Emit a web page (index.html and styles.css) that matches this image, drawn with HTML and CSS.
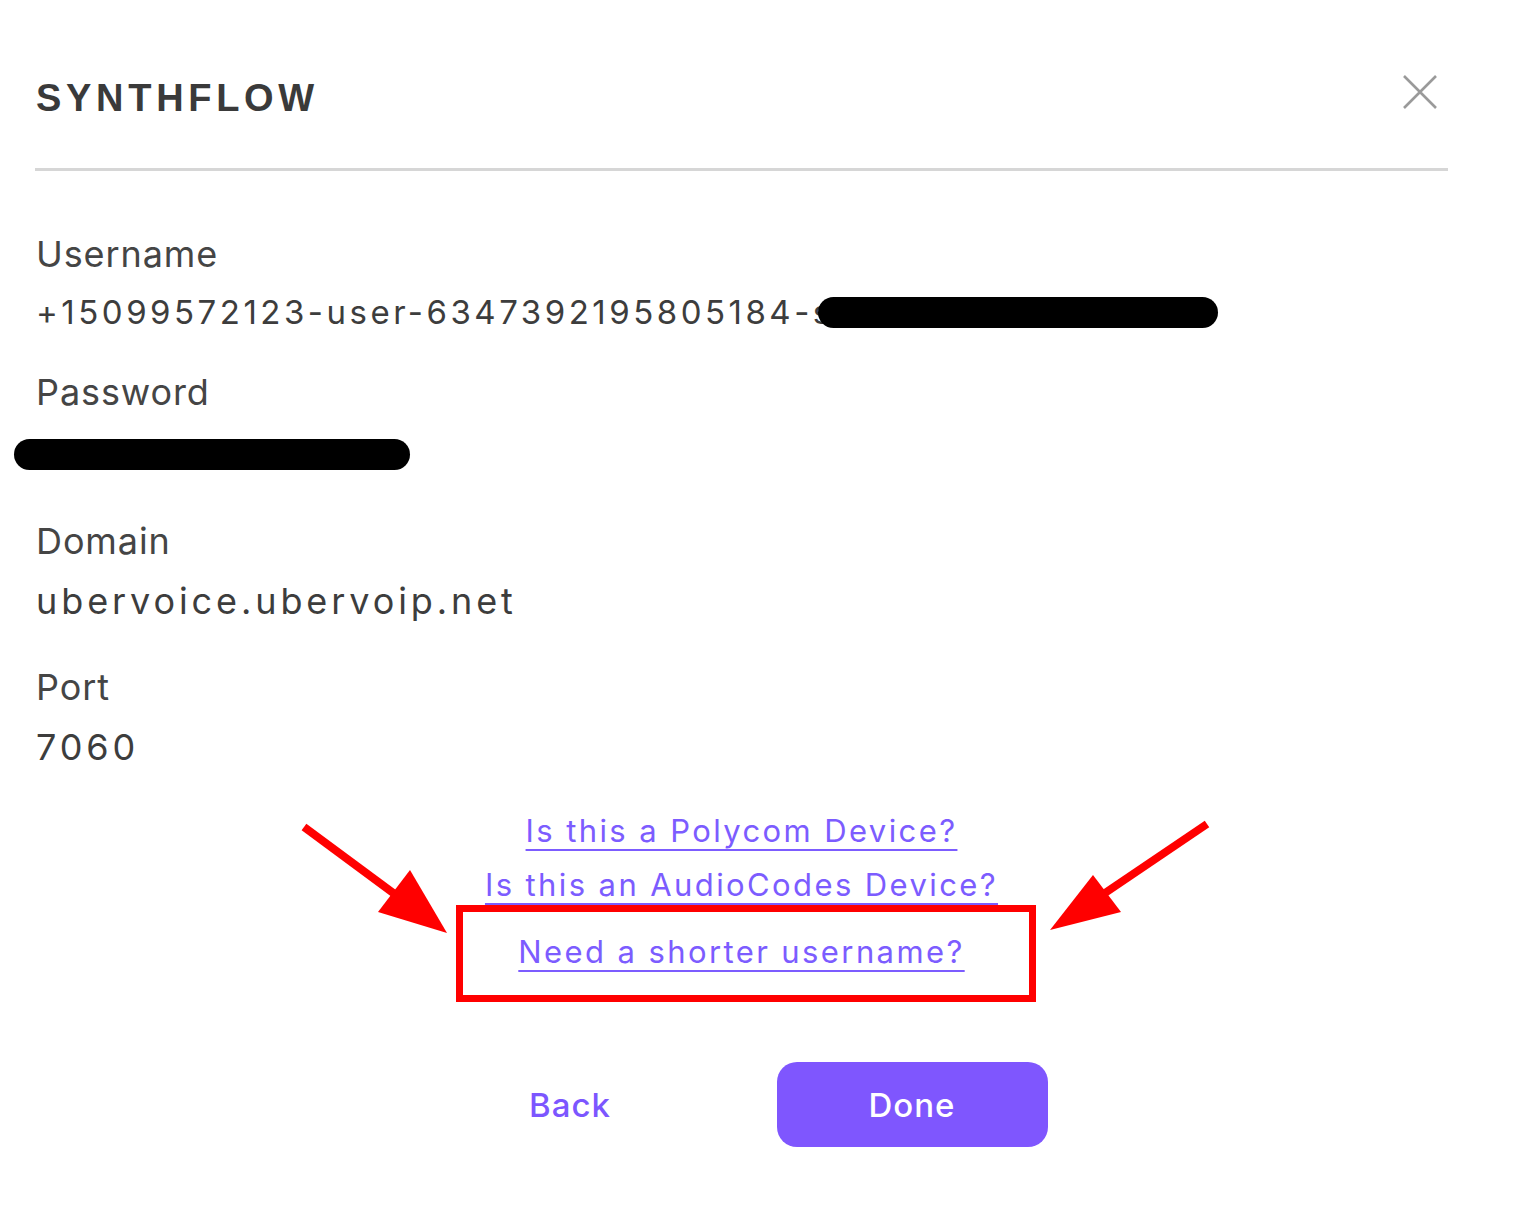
FILE: index.html
```html
<!DOCTYPE html>
<html lang="en">
<head>
<meta charset="utf-8">
<title>Synthflow</title>
<link rel="stylesheet" href="styles.css">
</head>
<body>
<div class="dialog">
  <header class="dialog-header">
    <h1 class="brand">SYNTHFLOW</h1>
    <button class="close" aria-label="Close">
      <svg width="36" height="36" viewBox="0 0 36 36"><path d="M2 2 L34 34 M34 2 L2 34" stroke="#9a9a9a" stroke-width="2.6" fill="none"/></svg>
    </button>
  </header>
  <div class="divider"></div>

  <section class="fields">
    <div class="field field-user">
      <div class="label">Username</div>
      <div class="value username">+15099572123-user-6347392195805184-s<span class="redact redact-user"></span></div>
    </div>
    <div class="field field-pass">
      <div class="label">Password</div>
      <div class="value password"><span class="redact redact-pass"></span></div>
    </div>
    <div class="field field-domain">
      <div class="label">Domain</div>
      <div class="value big">ubervoice.ubervoip.net</div>
    </div>
    <div class="field field-port">
      <div class="label">Port</div>
      <div class="value big">7060</div>
    </div>
  </section>

  <nav class="links">
    <a class="link" href="#">Is this a Polycom Device?</a>
    <a class="link" href="#">Is this an AudioCodes Device?</a>
    <div class="highlight-box">
      <a class="link" href="#">Need a shorter username?</a>
    </div>
  </nav>

  <div class="actions">
    <button class="btn btn-back">Back</button>
    <button class="btn btn-done">Done</button>
  </div>

  <svg class="arrows" width="1514" height="1228" viewBox="0 0 1514 1228">
    <line x1="304" y1="827" x2="400" y2="898" stroke="#ff0000" stroke-width="8"/>
    <polygon points="447,933 378,912 410,870" fill="#ff0000"/>
    <line x1="1207" y1="824" x2="1105" y2="893" stroke="#ff0000" stroke-width="8"/>
    <polygon points="1050,930 1093,875 1121,912" fill="#ff0000"/>
  </svg>
</div>
</body>
</html>
```

FILE: styles.css
```css
* { box-sizing: border-box; }
html, body {
  margin: 0;
  padding: 0;
  background: #ffffff;
}
body {
  font-family: "Inter", "Noto Sans", "Liberation Sans", sans-serif;
  color: #404040;
}
.dialog {
  position: relative;
  width: 1514px;
  height: 1228px;
  padding: 0 66px 0 35px;
}
.dialog-header {
  display: flex;
  justify-content: space-between;
  align-items: flex-start;
  padding-top: 74px;
  height: 168px;
}
.brand {
  margin: 0;
  padding-left: 1px;
  font-family: "Liberation Sans", Arial, sans-serif;
  font-weight: 700;
  font-size: 38px;
  line-height: 48px;
  letter-spacing: 4.7px;
  color: #3a3a3a;
}
.close {
  border: 0;
  background: none;
  padding: 0;
  margin: 0 10px 0 0;
  width: 36px;
  height: 36px;
  cursor: pointer;
}
.close svg { display: block; }
.divider {
  height: 3px;
  background: #d6d6d6;
}
.fields {
  display: flex;
  flex-direction: column;
  padding-top: 62px;
}
.field {
  display: flex;
  flex-direction: column;
  gap: 16px;
}
.field-user { margin-bottom: 38px; }
.field-pass { gap: 26px; margin-bottom: 50px; }
.field-domain { margin-bottom: 42px; }
.label {
  padding-left: 1px;
  font-size: 36px;
  line-height: 42px;
  color: #454545;
  letter-spacing: 0.9px;
}
.value {
  padding-left: 1px;
  font-size: 33px;
  line-height: 42px;
  letter-spacing: 3.5px;
  color: #3d3d3d;
  display: flex;
  align-items: center;
}
.value.big {
  font-size: 36px;
  letter-spacing: 3.9px;
  line-height: 46px;
}
.redact {
  display: inline-block;
  background: #000;
  border-radius: 16px;
  height: 31px;
}
.redact-user {
  width: 400px;
  margin-left: -16px;
}
.password {
  margin-left: -22px;
}
.redact-pass {
  width: 396px;
  height: 31px;
}
.links {
  display: flex;
  flex-direction: column;
  align-items: center;
  padding-top: 34px;
}
.link {
  font-size: 31px;
  line-height: 54px;
  letter-spacing: 2.4px;
  color: #7c5cff;
  text-decoration: underline;
  text-decoration-thickness: 1.5px;
  text-underline-offset: 7px;
}
.highlight-box {
  width: 580px;
  height: 97px;
  margin-top: -7px;
  margin-left: 9px;
  border: 7px solid #ff0000;
  display: flex;
  justify-content: center;
  padding-top: 13px;
}
.highlight-box .link {
  margin-left: -9px;
}
.actions {
  display: flex;
  justify-content: center;
  gap: 72px;
  margin-top: 60px;
}
.btn {
  width: 269px;
  height: 85px;
  border: 0;
  border-radius: 20px;
  font-family: "Inter", "Noto Sans", sans-serif;
  font-size: 33px;
  font-weight: 500;
  letter-spacing: 1px;
  cursor: pointer;
}
.btn-back {
  background: transparent;
  color: #7c56ff;
}
.btn-done {
  background: #7f56fe;
  color: #ffffff;
  width: 271px;
}
.arrows {
  position: absolute;
  left: 0;
  top: 0;
  pointer-events: none;
}
```
